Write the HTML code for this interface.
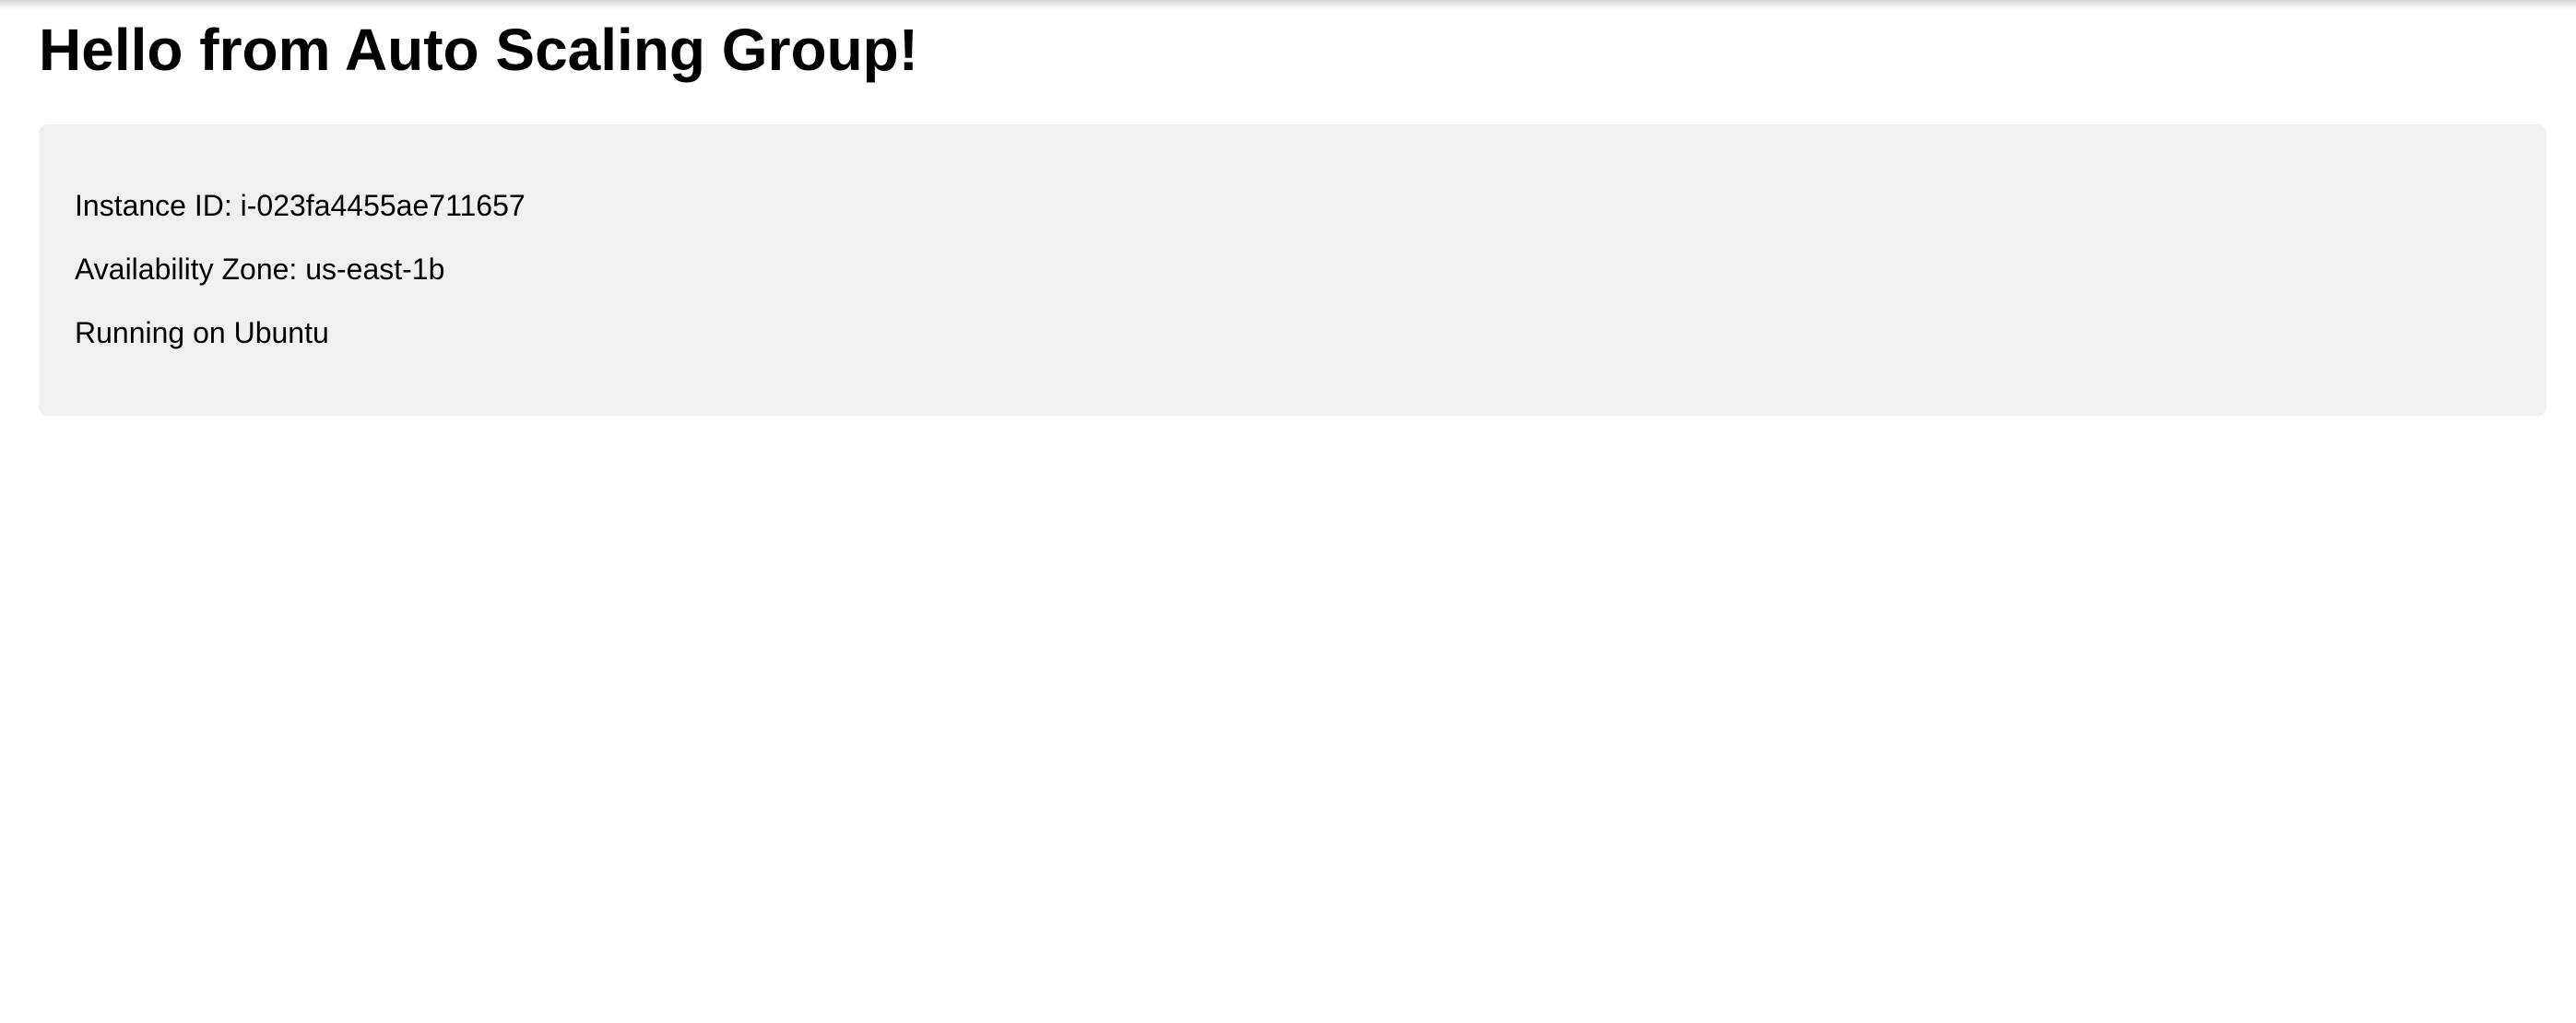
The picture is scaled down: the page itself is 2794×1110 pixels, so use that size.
<!DOCTYPE html>
<html><head><meta charset="utf-8"><style>
html,body{margin:0;padding:0;background:#fff;width:2794px;height:1110px;overflow:hidden;font-family:"Liberation Sans",Arial,sans-serif;color:#000}
.shadow{position:absolute;left:0;top:0;width:2794px;height:10px;background:linear-gradient(#d6d6d6,rgba(255,255,255,0))}
h1{position:absolute;left:42px;top:17px;margin:0;font-size:64px;font-weight:bold;line-height:74px;white-space:nowrap}
.box{position:absolute;left:42px;top:135px;width:2720px;height:316px;background:#f0f0f0;border-radius:10px;box-sizing:border-box;padding:38px 39px}
.box p{margin:32px 0;font-size:32px;line-height:36.8px;white-space:nowrap}
</style></head><body>
<div class="shadow"></div>
<h1>Hello from Auto Scaling Group!</h1>
<div class="box">
<p>Instance ID: i-023fa4455ae711657</p>
<p>Availability Zone: us-east-1b</p>
<p>Running on Ubuntu</p>
</div>
</body></html>
